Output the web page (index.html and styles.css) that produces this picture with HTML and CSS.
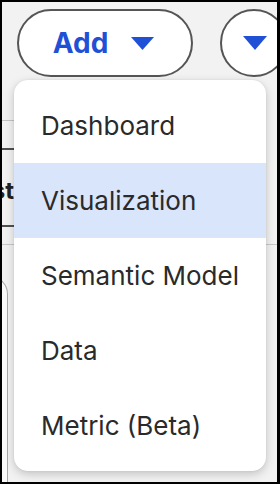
FILE: index.html
```html
<!DOCTYPE html>
<html lang="en">
<head>
<meta charset="utf-8">
<title>Add menu</title>
<link rel="stylesheet" href="styles.css">
</head>
<body>
<div class="frame">
  <div class="toolbar">
    <button class="add-btn" type="button">
      <span class="add-label">Add</span>
      <svg class="caret" width="23" height="13" viewBox="0 0 23 13"><polygon points="0,0 23,0 11.5,13" fill="#1f50d6"/></svg>
    </button>
    <button class="circle-btn" type="button">
      <svg class="caret" width="24" height="14" viewBox="0 0 24 14"><polygon points="0,0 24,0 12,14" fill="#1f50d6"/></svg>
    </button>
  </div>

  <div class="table">
    <div class="line-light"></div>
    <div class="line-dark first"></div>
    <div class="trow"><div class="clip"><span class="bold-text">Latest</span></div></div>
    <div class="line-dark"></div>
  </div>
  <div class="line-full"></div>
  <div class="card"></div>

  <ul class="menu">
    <li class="item">Dashboard</li>
    <li class="item active">Visualization</li>
    <li class="item">Semantic Model</li>
    <li class="item">Data</li>
    <li class="item">Metric (Beta)</li>
  </ul>
</div>
</body>
</html>
```

FILE: styles.css
```css
* { box-sizing: border-box; }
html, body { margin: 0; padding: 0; }
body {
  width: 280px;
  height: 484px;
  background: #000;
  font-family: Inter, "Noto Sans", "Liberation Sans", sans-serif;
}
.frame {
  position: relative;
  width: 280px;
  height: 484px;
  border-style: solid;
  border-color: #000;
  border-width: 2px 3px 2px 2px;
  background: #f2f2f2;
  overflow: hidden;
}
.toolbar {
  display: flex;
  gap: 27px;
  padding: 7px 0 0 15px;
  height: 75px;
}
.add-btn {
  flex: 0 0 176px;
  height: 68px;
  border: 2px solid #555;
  border-radius: 34px;
  background: #fff;
  display: flex;
  align-items: center;
  justify-content: center;
  gap: 23px;
  padding: 0 3px 0 0;
  font-family: inherit;
  cursor: pointer;
}
.add-label {
  font-size: 28px;
  font-weight: 700;
  color: #1f50d6;
  line-height: 1;
}
.caret { display: block; }
.circle-btn {
  flex: 0 0 68px;
  width: 68px;
  height: 68px;
  border: 2px solid #555;
  border-radius: 50%;
  background: #fff;
  display: flex;
  align-items: center;
  justify-content: center;
  padding: 0 0 1px 2px;
}
.table {
  width: 240px;
  margin-top: 43px;
}
.line-light {
  height: 1px;
  background: #c4c4c4;
}
.line-dark {
  height: 2px;
  background: #505050;
}
.line-dark.first { margin-top: 27px; }
.trow {
  height: 75px;
  display: flex;
  align-items: center;
}
.clip {
  width: 12px;
  overflow: hidden;
  display: flex;
  justify-content: flex-end;
  white-space: nowrap;
  padding-top: 6px;
}
.bold-text {
  font-size: 24px;
  font-weight: 700;
  color: #222;
}
.line-full {
  margin-top: 17px;
  height: 1px;
  background: #c8c8c8;
}
.card {
  margin-top: 31px;
  margin-left: -200px;
  width: 206px;
  height: 220px;
  background: #fafafa;
  border-right: 1px solid #a8a8a8;
  border-top: 1px solid #a8a8a8;
  border-top-right-radius: 18px;
}
.menu {
  position: absolute;
  left: 12px;
  top: 78px;
  width: 252px;
  margin: 0;
  padding: 8px 0;
  list-style: none;
  background: #fff;
  border-radius: 14px;
  box-shadow: 0 3px 10px rgba(0, 0, 0, 0.2), 0 0 2px rgba(0, 0, 0, 0.08);
}
.item {
  height: 75px;
  display: flex;
  align-items: center;
  padding-left: 27px;
  font-size: 26px;
  color: #2a2a2a;
}
.item.active {
  background: #d9e5fb;
}
```
